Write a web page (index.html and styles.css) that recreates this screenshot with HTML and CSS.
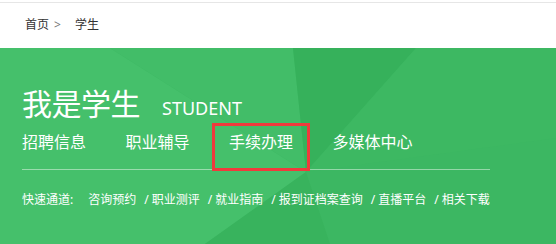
FILE: index.html
```html
<!DOCTYPE html>
<html lang="zh-CN">
<head>
<meta charset="utf-8">
<title>我是学生</title>
<link rel="stylesheet" href="styles.css">
</head>
<body>
<header class="top">
  <div class="crumbs">
    <a class="crumb" href="#">首页</a><span class="crumb-sep">&gt;</span><span class="crumb current">学生</span>
  </div>
</header>
<section class="banner">
  <svg class="banner-bg" width="556" height="196" viewBox="0 0 556 196" preserveAspectRatio="none" aria-hidden="true">
    <rect x="0" y="0" width="556" height="196" fill="#3cb762"/>
    <polygon points="0,0 110,0 306,124 205,196 0,196" fill="#45c06b"/>
    <polygon points="110,0 293,0 306,124" fill="#42bd68"/>
    <polygon points="293,0 416,0 306,124" fill="#36b15b"/>
    <polygon points="306,124 205,196 330,196" fill="#38b35d"/>
    <polygon points="416,0 556,0 556,90 306,124" fill="#3db862"/>
  </svg>
  <div class="banner-inner">
    <div class="title-row">
      <h1 class="title">我是学生</h1>
      <span class="title-en">STUDENT</span>
    </div>
    <div class="nav-wrap">
      <nav class="nav">
        <a class="nav-item" href="#">招聘信息</a>
        <a class="nav-item" href="#">职业辅导</a>
        <a class="nav-item active" href="#">手续办理</a>
        <a class="nav-item" href="#">多媒体中心</a>
      </nav>
    </div>
    <div class="quick">
      <span class="quick-label">快速通道:</span><a class="quick-link" href="#">咨询预约</a><span class="quick-sep">/</span><a class="quick-link" href="#">职业测评</a><span class="quick-sep">/</span><a class="quick-link" href="#">就业指南</a><span class="quick-sep">/</span><a class="quick-link" href="#">报到证档案查询</a><span class="quick-sep">/</span><a class="quick-link" href="#">直播平台</a><span class="quick-sep">/</span><a class="quick-link" href="#">相关下载</a>
    </div>
  </div>
</section>
</body>
</html>
```

FILE: styles.css
```css
* { box-sizing: border-box; }
html, body { margin: 0; padding: 0; }
body {
  width: 556px;
  height: 244px;
  overflow: hidden;
  background: #fff;
  font-family: "Noto Sans", "Noto Sans CJK SC", sans-serif;
}
a { text-decoration: none; color: inherit; }

.top {
  height: 48px;
  padding-top: 2px;
  background: #fff;
}
.crumbs {
  height: 46px;
  border-top: 1px solid #e6e6e6;
  padding: 12px 0 0 25px;
  font-size: 12px;
  line-height: 20px;
  color: #333;
}
.crumb-sep {
  color: #777;
  margin: 0 14px 0 5px;
}

.banner {
  position: relative;
  height: 196px;
  overflow: hidden;
  color: #fff;
}
.banner-bg {
  position: absolute;
  left: 0;
  top: 0;
  display: block;
}
.banner-inner {
  position: relative;
  padding: 38px 0 0 22px;
}

.title-row {
  display: flex;
  align-items: baseline;
  height: 37px;
}
.title {
  margin: 0;
  font-size: 30px;
  font-weight: normal;
  line-height: 36px;
  letter-spacing: -0.5px;
}
.title-en {
  margin-left: 22px;
  font-size: 18px;
  line-height: 36px;
}

.nav-wrap {
  width: 468px;
  border-bottom: 1px solid rgba(255, 255, 255, 0.45);
}
.nav {
  display: flex;
  gap: 5.5px;
  margin-left: -17px;
  margin-bottom: -2px;
}
.nav-item {
  display: block;
  border: 3px solid transparent;
  padding: 0 14px 10px;
  font-size: 16px;
  line-height: 32px;
  color: #fff;
}
.nav-item.active {
  border-color: #f03a3c;
}

.quick {
  margin-top: 20px;
  font-size: 12px;
  line-height: 20px;
  white-space: nowrap;
}
.quick-label {
  margin-right: 15px;
}
.quick-sep {
  margin: 0 3px 0 8px;
}
```
